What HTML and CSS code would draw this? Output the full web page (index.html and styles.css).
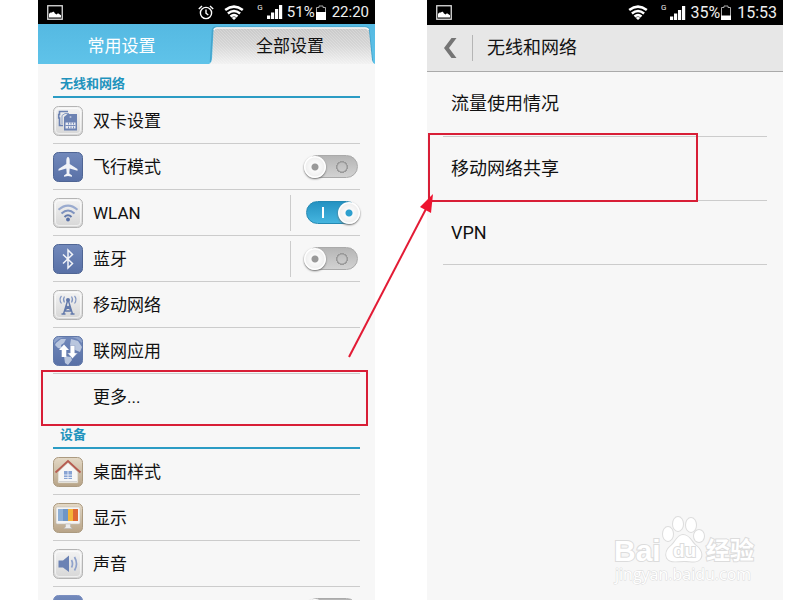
FILE: index.html
```
<!DOCTYPE html>
<html lang="zh-CN">
<head>
  <meta charset="UTF-8">
  <meta name="viewport" content="width=device-width, initial-scale=1.0">
  <title>无线和网络</title>
  <link rel="stylesheet" href="styles.css">
</head>
<body>
  <!-- shared icon parts -->
  <svg class="defs" aria-hidden="true">
    <defs>
      <linearGradient id="blue" x1="0" y1="0" x2="0" y2="1"><stop offset="0" stop-color="#7289bb"/><stop offset="1" stop-color="#5870a6"/></linearGradient>
      <linearGradient id="grey" x1="0" y1="0" x2="0" y2="1"><stop offset="0" stop-color="#f4f4f4"/><stop offset="1" stop-color="#d6d6d6"/></linearGradient>
      <linearGradient id="tan" x1="0" y1="0" x2="0" y2="1"><stop offset="0" stop-color="#e4d9c6"/><stop offset="1" stop-color="#b7a387"/></linearGradient>
      <linearGradient id="tab" x1="0" y1="0" x2="0" y2="1"><stop offset="0" stop-color="#c9c9c9"/><stop offset="0.5" stop-color="#d6d6d6"/><stop offset="1" stop-color="#f2f2f2"/></linearGradient>
      <pattern id="hatch" width="3" height="3" patternUnits="userSpaceOnUse"><path d="M0 0l3 3" stroke="#fff" stroke-opacity=".3" stroke-width=".7"/></pattern>
      <clipPath id="round"><rect x=".5" y=".5" width="29" height="29" rx="5"/></clipPath>
    </defs>
    <symbol id="photo" viewBox="0 0 16 15">
      <rect x=".75" y=".75" width="14.5" height="13.5" fill="none" stroke="#ddd" stroke-width="1.3"/>
      <path d="M2 12.500V9C3 7.500 4 7.200 5 7.500C5.800 6.300 7.200 6.700 7.700 8.200L9.500 9.400L11 8.300L14 10.300V12.500Z" fill="#fff"/>
    </symbol>
    <symbol id="wifi" viewBox="0 0 20 15">
      <g fill="none" stroke="#fff" stroke-width="2.600">
        <path d="M1.200 5Q10-1.700 18.800 5"/>
        <path d="M3.900 8.400Q10 3.600 16.100 8.400"/>
        <path d="M6.500 11.500Q10 8.700 13.500 11.500"/>
      </g>
      <path d="M10 15L7.600 12.800Q10 11.200 12.400 12.800Z" fill="#fff"/>
    </symbol>
    <symbol id="signal" viewBox="0 0 16 14">
      <path d="M0 10.500h3.200V14H0zM4 7.500h3.200V14H4zM8 4h3.200v10H8zM12 0h3.200v14H12z" fill="#fff"/>
    </symbol>
  </svg>

  <main class="screens">
    <section class="phone phone-a">
      <div class="status">
        <svg class="photo"><use href="#photo"/></svg>
        <svg class="alarm" viewBox="0 0 16 15">
          <g fill="none" stroke="#fff" stroke-width="1.400">
            <circle cx="8" cy="8" r="5.600"/>
            <path d="M8 4.500V8.200L10.300 10M.8 4L4 1.100M15.200 4L12 1.100"/>
          </g>
        </svg>
        <svg class="wifi"><use href="#wifi"/></svg>
        <span class="gen">G</span>
        <svg class="signal"><use href="#signal"/></svg>
        <span class="percent">51%</span>
        <svg class="battery" viewBox="0 0 10 15">
          <path d="M3 2.500V1h4v1.500h2.500v12h-9v-12z" fill="none" stroke="#aaa"/>
          <path d="M0 7h10V15H0z" fill="#fff"/>
        </svg>
        <time>22:20</time>
      </div>

      <nav class="tabs">
        <button class="tab" type="button">常用设置</button>
        <button class="tab active" type="button">
          <svg class="tab-shape" viewBox="0 0 170 40" preserveAspectRatio="none">
            <path d="M5.500 38L7.500 6Q8 3 11 3H160.500Q163.500 3 164 6L167.500 38" fill="none" stroke="#46a5cc" stroke-width="1.500"/>
            <path d="M4 40Q6.500 39 7 35L8.500 7Q9 3.500 12 3.500H160Q163.500 3.500 164 7L167 36Q167.500 39 170 40Z" fill="url(#tab)"/>
            <path d="M4 40Q6.500 39 7 35L8.500 7Q9 3.500 12 3.500H160Q163.500 3.500 164 7L167 36Q167.500 39 170 40Z" fill="url(#hatch)"/>
            <path d="M9 6Q9.500 4 12 4H160Q163 4 163.500 6" fill="none" stroke="#f5f5f5" stroke-width="1.500"/>
          </svg>
          <span>全部设置</span>
        </button>
      </nav>

      <div class="settings">
        <h2>无线和网络</h2>
        <ul>
          <li class="row">
            <svg class="icon" viewBox="0 0 30 30">
              <rect x=".5" y=".5" width="29" height="29" rx="5" fill="url(#grey)" stroke="#b4b4b4"/>
              <rect x="2.500" y="2.500" width="25" height="25" rx="3.500" fill="none" stroke="#fff" stroke-opacity=".6"/>
              <path d="M15 5.500H6.500V8.500H5.700V12H6.500V19.500H10" fill="none" stroke="#6c82b2" stroke-width="1.600"/>
              <path d="M9 9.500L12 7.500H16M9 9.500V18" fill="none" stroke="#8c9fc6"/>
              <path d="M11 11L14.500 8H24V24.500H11Z" fill="#6c82b2"/>
              <path d="M12.500 16.500h10v6h-10z" fill="#e8ebf2"/>
              <path d="M12.500 19.500h10M15.500 16.500v2M18 16.500v2M20.500 16.500v2M15.500 20.500v2M18 20.500v2M20.500 20.500v2" stroke="#6c82b2" stroke-width=".9"/>
              <circle cx="17.500" cy="11" r="1" fill="#b5c1db"/>
            </svg>
            <span>双卡设置</span>
          </li>
          <li class="row">
            <svg class="icon" viewBox="0 0 30 30">
              <rect x=".5" y=".5" width="29" height="29" rx="5" fill="url(#blue)" stroke="#4f6594"/>
              <path d="M15 5C16.200 5 16.700 7 16.700 9V12L24.500 17V18.700L16.700 16.500L16.300 21.500L19 23.500V24.700L15 24L11 24.700V23.500L13.700 21.500L13.300 16.500L5.500 18.700V17L13.300 12V9C13.300 7 13.800 5 15 5Z" fill="#f1f3f8"/>
            </svg>
            <label for="flight">飞行模式</label>
            <input class="switch" type="checkbox" id="flight">
          </li>
          <li class="row">
            <svg class="icon" viewBox="0 0 30 30">
              <rect x=".5" y=".5" width="29" height="29" rx="5" fill="url(#grey)" stroke="#b4b4b4"/>
              <rect x="2.500" y="2.500" width="25" height="25" rx="3.500" fill="none" stroke="#fff" stroke-opacity=".6"/>
              <g fill="none" stroke-width="2">
                <path d="M5.500 11.800Q15 3.500 24.500 11.800" stroke="#9aabcf"/>
                <path d="M8.500 15.500Q15 9.500 21.500 15.500" stroke="#7f93bf"/>
                <path d="M11.500 19Q15 15.500 18.500 19" stroke="#6178aa"/>
              </g>
              <circle cx="15" cy="21.500" r="1.900" fill="#5870a6"/>
            </svg>
            <label for="wlan">WLAN</label>
            <div class="split"><input class="switch" type="checkbox" id="wlan" checked></div>
          </li>
          <li class="row">
            <svg class="icon" viewBox="0 0 30 30">
              <rect x=".5" y=".5" width="29" height="29" rx="5" fill="url(#blue)" stroke="#4f6594"/>
              <path d="M10 10.500L19.500 19.500L15 24V6L19.500 10.500L10 19.500" fill="none" stroke="#f1f3f8" stroke-width="1.500"/>
            </svg>
            <label for="bluetooth">蓝牙</label>
            <div class="split"><input class="switch" type="checkbox" id="bluetooth"></div>
          </li>
          <li class="row">
            <svg class="icon" viewBox="0 0 30 30">
              <rect x=".5" y=".5" width="29" height="29" rx="5" fill="url(#grey)" stroke="#b4b4b4"/>
              <rect x="2.500" y="2.500" width="25" height="25" rx="3.500" fill="none" stroke="#fff" stroke-opacity=".6"/>
              <g fill="none" stroke="#6178aa" stroke-width="1.400">
                <path d="M14.500 11L10.500 24M15.500 11L19.500 24M8.500 24H12.500M17.500 24H21.500M13 15.500L18.500 20.500M17 15.500L11.500 20.500M12.500 17H17.500M11.500 21H18.500"/>
                <path d="M11.500 6.500Q9.500 9.500 11.500 12.500M18.500 6.500Q20.500 9.500 18.500 12.500M8.500 6Q5.500 9.500 8.500 13.500M21.500 6Q24.500 9.500 21.500 13.500" stroke="#8296c1" stroke-width="1.200"/>
              </g>
              <circle cx="15" cy="10" r="2" fill="#6178aa"/>
            </svg>
            <span>移动网络</span>
          </li>
          <li class="row">
            <svg class="icon" viewBox="0 0 30 30">
              <g clip-path="url(#round)">
                <rect width="30" height="30" fill="url(#blue)"/>
                <path d="M0 0H30V8Q23 0 15 1Q6 0 0 9Z" fill="#8fa3cb"/>
                <path d="M3 7L8 3L13 3L11 7L8 9L9 13L5 12L2 9ZM18 3L25 5L29 11L27 16L22 14L17 9ZM11 20L18 21L19 24L15 29L12 27Z" fill="#b9c6de"/>
              </g>
              <rect x=".5" y=".5" width="29" height="29" rx="5" fill="none" stroke="#6178a8"/>
              <path d="M11 8.500L16 14H13.300V21H8.700V14H6Z" fill="#fff"/>
              <path d="M19.500 22.500L24.500 17H21.800V9.500H17.200V17H14.500Z" fill="#fff" stroke="#8093bb" stroke-width=".5"/>
            </svg>
            <span>联网应用</span>
          </li>
          <li class="row more marked">
            <span>更多...</span>
          </li>
        </ul>

        <h2>设备</h2>
        <ul>
          <li class="row">
            <svg class="icon" viewBox="0 0 30 30">
              <rect x=".5" y=".5" width="29" height="29" rx="5" fill="url(#tan)" stroke="#ab9a80"/>
              <path d="M5 15L15 5.500L25 15V26H5Z" fill="#f6f6f5" stroke="#c6bba8" stroke-width=".7"/>
              <path d="M2.500 15.500L15 4L27.500 15.500" fill="none" stroke="#b65c51" stroke-width="1.700"/>
              <path d="M11 14h8v8h-8z" fill="#87a3d3"/>
              <path d="M15 14v8M11 18h8M11 20.500h8" stroke="#edf1f7" stroke-width=".9"/>
              <path d="M6 24.500H24" stroke="#d3d3d3"/>
            </svg>
            <span>桌面样式</span>
          </li>
          <li class="row">
            <svg class="icon" viewBox="0 0 30 30">
              <rect x=".5" y=".5" width="29" height="29" rx="5" fill="url(#tan)" stroke="#ab9a80"/>
              <rect x="3" y="4" width="24" height="17" rx="1.500" fill="#f4f4f4" stroke="#c5c0b8" stroke-width=".6"/>
              <path d="M5 6h5v12H5z" fill="#8eafd5"/>
              <path d="M10 6h5v12h-5z" fill="#6f96c6"/>
              <path d="M15 6h5v12h-5z" fill="#f3b43a"/>
              <path d="M20 6h5v12h-5z" fill="#df6835"/>
              <path d="M12.500 21h5v3l2 1.500h-9l2-1.500z" fill="#ececec" stroke="#aaa" stroke-width=".4"/>
            </svg>
            <span>显示</span>
          </li>
          <li class="row">
            <svg class="icon" viewBox="0 0 30 30">
              <rect x=".5" y=".5" width="29" height="29" rx="5" fill="url(#grey)" stroke="#b4b4b4"/>
              <rect x="2.500" y="2.500" width="25" height="25" rx="3.500" fill="none" stroke="#fff" stroke-opacity=".6"/>
              <path d="M5.500 11.500H10L16 6.500V23L10 18.500H5.500Z" fill="#6b82b4"/>
              <path d="M18.500 11Q20.500 15 18.500 18.500M21.500 8Q25.500 15 21.500 21.500" fill="none" stroke="#8fa2cb" stroke-width="1.700"/>
            </svg>
            <span>声音</span>
          </li>
          <li class="row">
            <svg class="icon" viewBox="0 0 30 30">
              <rect x=".5" y=".5" width="29" height="29" rx="5" fill="url(#blue)" stroke="#7c8fc0"/>
            </svg>
            <input class="switch" type="checkbox" aria-label="免打扰">
          </li>
        </ul>
      </div>
    </section>

    <section class="phone phone-b">
      <div class="status">
        <svg class="photo"><use href="#photo"/></svg>
        <svg class="wifi"><use href="#wifi"/></svg>
        <span class="gen">G</span>
        <svg class="signal"><use href="#signal"/></svg>
        <span class="percent">35%</span>
        <svg class="battery" viewBox="0 0 10 15">
          <path d="M3 2.500V1h4v1.500h2.500v12h-9v-12z" fill="none" stroke="#aaa"/>
          <path d="M0 10.500h10V15H0z" fill="#fff"/>
        </svg>
        <time>15:53</time>
      </div>

      <header class="titlebar">
        <button class="back" type="button" aria-label="返回">
          <svg viewBox="0 0 14 20"><path d="M8.500 0H13.500L6 10L13.500 20H8.500L1 10Z" fill="#757575"/></svg>
        </button>
        <h1>无线和网络</h1>
      </header>

      <ul class="options">
        <li class="option">流量使用情况</li>
        <li class="option marked">移动网络共享</li>
        <li class="option">VPN</li>
      </ul>

      <svg class="watermark" viewBox="0 0 150 76">
        <g fill="#fff" stroke="#dcdcdc" stroke-width="2" paint-order="stroke">
          <text class="wm-logo" x="3" y="47">Bai</text>
          <ellipse cx="57" cy="20" rx="5" ry="7"/>
          <ellipse cx="67" cy="10" rx="5" ry="7"/>
          <ellipse cx="80" cy="11" rx="5" ry="7"/>
          <ellipse cx="88" cy="22" rx="5" ry="6"/>
          <path d="M72 21C78 21 80 27 84 31C90 35 92 41 89 45C86 49 80 47 73 47C66 47 59 49 56 44C54 39 56 35 61 31C65 27 67 21 72 21Z"/>
          <text class="wm-du" x="62" y="43">du</text>
          <text class="wm-cjk" x="95" y="45">经验</text>
          <text class="wm-url" x="4" y="66">jingyan.baidu.com</text>
        </g>
      </svg>
    </section>

    <!-- pointer from one marked row to the other -->
    <svg class="arrow" viewBox="0 0 100 180" aria-hidden="true">
      <path d="M9 177L87 27" stroke="#e31b35" stroke-width="2"/>
      <path d="M93 14L91 33L80 27Z" fill="#ee1430"/>
    </svg>
  </main>
</body>
</html>
```
FILE: styles.css
```
* { margin: 0; padding: 0; box-sizing: border-box; }

body {
  height: 100vh;
  overflow: hidden;
  background: #fff;
  color: #111;
  font-family: Roboto, "Noto Sans CJK SC", sans-serif;
  font-size: 17px;
  line-height: 24px;
}
ul { list-style: none; }
button { border: 0; background: none; font: inherit; cursor: pointer; }
.defs { position: absolute; width: 0; height: 0; }

.screens {
  display: grid;
  grid-template-columns: 337fr 356fr;
  column-gap: 52px;
  height: 100%;
  padding: 0 17px 0 38px;
  position: relative;
}
.phone { background: #f7f7f7; overflow: hidden; position: relative; }

/* status bar */
.status {
  display: flex;
  align-items: center;
  height: 24px;
  padding: 0 6px 0 9px;
  background: #000;
  color: #eee;
  font-size: 15px;
}
.photo { width: 16px; height: 15px; margin-right: auto; }
.alarm { width: 16px; height: 15px; margin-right: 10px; }
.wifi { width: 20px; height: 15px; margin-right: 13px; }
.gen { align-self: flex-start; margin: 4px 4px 0 0; font-size: 8px; line-height: 8px; }
.signal { width: 16px; height: 14px; margin-right: 4px; }
.battery { width: 10px; height: 15px; margin: 0 6px 0 1px; }
.phone-b .status { font-size: 16px; height: 25px; }

/* tabs */
.tabs {
  display: grid;
  grid-template-columns: 167fr 170fr;
  height: 40px;
  background: linear-gradient(#55b9e2, #5fc3e9);
}
.tab { position: relative; color: #fff; padding-top: 4px; }
.tab.active { color: #111; }
.tab span { position: relative; }
.tab-shape { position: absolute; left: 0; top: 0; width: 100%; height: 100%; }

/* settings list */
.settings { padding: 5px 15px 0; }
.settings h2 {
  height: 29px;
  padding: 5px 7px 0;
  border-bottom: 2px solid #2b9cc4;
  color: #1f93bd;
  font-size: 13px;
  line-height: 20px;
}
.row {
  display: flex;
  align-items: center;
  gap: 10px;
  height: 46px;
  border-bottom: 1px solid #ccc;
  position: relative;
}
.row.more { padding-left: 40px; border-bottom: 0; }
.icon { width: 30px; height: 30px; }
.split {
  display: flex;
  align-items: center;
  height: 36px;
  margin-left: auto;
  padding-left: 13px;
  border-left: 1px solid #ccc;
}

.switch {
  appearance: none;
  width: 56px;
  height: 24px;
  margin-left: auto;
  position: relative;
  cursor: pointer;
}
/* track */
.switch::before {
  content: "";
  position: absolute;
  inset: 0 2px 1px;
  border-radius: 12px;
  border: 1px solid #aaa;
  background:
    radial-gradient(circle at 35px 11px, transparent 4px, #999 5px, #999 6px, transparent 6px),
    linear-gradient(#b5b5b5, #d2d2d2);
}
/* knob */
.switch::after {
  content: "";
  position: absolute;
  left: 0;
  top: 1px;
  width: 22px;
  height: 22px;
  border-radius: 50%;
  background: radial-gradient(circle, #999 3px, #fafafa 4px, #f0f0f0 9px, #fff 10px);
  box-shadow: 0 1px 2px #666;
}
.switch:checked::before {
  border-color: #2489b3;
  background:
    linear-gradient(#fff, #fff) 15px 5px / 2px 11px no-repeat,
    linear-gradient(#2492c2, #45b5df);
}
.switch:checked::after {
  left: auto;
  right: 0;
  background: radial-gradient(circle, #2d9fce 3px, #fafafa 4px, #f0f0f0 9px, #fff 10px);
}

/* second screen */
.titlebar {
  display: flex;
  align-items: center;
  height: 47px;
  padding-left: 15px;
  background: #e7e7e7;
  border-bottom: 1px solid #aaa;
}
.back {
  display: flex;
  align-items: center;
  width: 31px;
  height: 26px;
  border-right: 1px solid #b5b5b5;
}
.back svg { width: 16px; height: 20px; }
.titlebar h1 { margin-left: 14px; font-size: 18px; font-weight: normal; }
.options { padding: 0 16px; font-size: 18px; }
.option {
  display: flex;
  align-items: center;
  height: 64px;
  padding-left: 8px;
  border-bottom: 1px solid #ccc;
  position: relative;
}
.options .option:first-child { height: 65px; }

/* red marks */
.marked::after {
  content: "";
  position: absolute;
  border: 2px solid #d81e36;
}
.row.marked::after { inset: -4px -8px -6px -12px; }
.option.marked::after { inset: -4px 69px -2px -15px; }
.arrow { position: absolute; left: 340px; top: 180px; width: 100px; height: 180px; }

.watermark { position: absolute; right: 22px; bottom: 10px; width: 150px; height: 76px; }
.wm-logo { font: bold 30px "Liberation Sans", sans-serif; }
.wm-du { font: bold 19px "Liberation Sans", sans-serif; }
.wm-cjk { font: bold 24px "Noto Sans CJK SC", sans-serif; }
.wm-url { font: 16px "Open Sans", sans-serif; stroke-width: 1px; }
```
